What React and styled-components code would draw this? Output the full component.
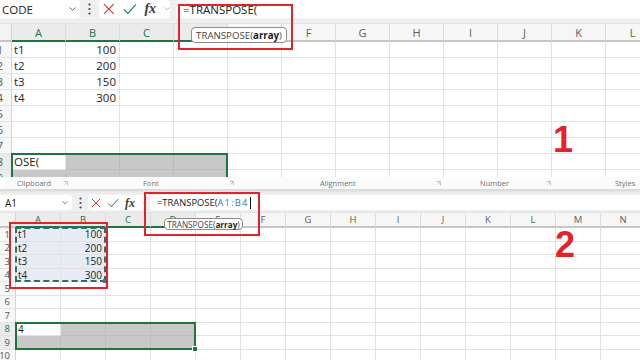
import React from 'react'
import styled, { createGlobalStyle } from 'styled-components'

const GlobalStyle = createGlobalStyle`
  html, body {
    margin: 0;
    padding: 0;
    background: #ffffff;
  }
  body {
    font-family: 'Open Sans', 'Liberation Sans', sans-serif;
  }
`

const RED = '#e3232a'
const GREEN = '#217346'

const Page = styled.div`
  position: relative;
  width: 640px;
  height: 360px;
  overflow: hidden;
  display: flex;
  flex-direction: column;
  background: #fff;
`

const Panel = styled.section`
  display: flex;
  flex-direction: column;
  overflow: hidden;
  flex: ${(p) => (p.$h ? `0 0 ${p.$h}px` : '1 1 auto')};
`

const FormulaBar = styled.div`
  display: flex;
  align-items: stretch;
  flex: 0 0 ${(p) => p.$h}px;
  box-sizing: border-box;
  padding: ${(p) => p.$padT}px 0 ${(p) => p.$padB}px;
  background: #efefef;
  border-bottom: 1px solid #e2e2e2;
`

const NameBox = styled.div`
  display: flex;
  align-items: center;
  justify-content: space-between;
  width: ${(p) => p.$w}px;
  box-sizing: border-box;
  padding: 0 4px 0 ${(p) => p.$pad}px;
  background: #fff;
  border-radius: 0 3px 3px 0;
  color: #222;
  font-size: ${(p) => p.$size}px;
`

const Dots = styled.div`
  display: flex;
  align-items: center;
  justify-content: center;
  width: ${(p) => p.$w}px;
`

const IconBox = styled.div`
  display: flex;
  align-items: center;
  gap: ${(p) => p.$gap}px;
  width: ${(p) => p.$w}px;
  box-sizing: border-box;
  padding-left: ${(p) => p.$pad}px;
  background: #fff;
  border-radius: 3px;
`

const Fx = styled.span`
  font-family: 'Liberation Serif', 'DejaVu Serif', serif;
  font-style: italic;
  font-weight: bold;
  font-size: ${(p) => p.$size}px;
  color: #3a3a3a;
  line-height: 1;
`

const FormulaInput = styled.div`
  flex: 1;
  display: flex;
  align-items: center;
  margin-left: ${(p) => p.$gap}px;
  padding-left: ${(p) => p.$pad}px;
  background: #fff;
  border-radius: 3px 0 0 3px;
  color: #1a1a1a;
  font-size: ${(p) => p.$size}px;
  white-space: pre;
`

const RefText = styled.span`
  color: #2f75b5;
  letter-spacing: 1.2px;
`

const Caret = styled.span`
  display: inline-block;
  width: 1px;
  height: 12px;
  margin-left: 1px;
  background: #111;
`

const Grid = styled.div`
  display: grid;
  grid-template-columns: ${(p) => p.$rowHdr}px repeat(${(p) => p.$cols}, ${(p) => p.$colW}px);
  grid-template-rows: ${(p) => p.$hdrH}px repeat(${(p) => p.$rows}, ${(p) => p.$rowH}px);
  flex: 1;
  overflow: hidden;
`

const Placed = styled.div`
  grid-row: ${(p) => p.$r};
  grid-column: ${(p) => p.$c};
  box-sizing: border-box;
`

const Corner = styled(Placed)`
  background: #f3f3f3;
  border-right: 1px solid #d4d4d4;
  border-bottom: 2px solid #c4c4c4;
`

const ColHeader = styled(Placed)`
  display: flex;
  align-items: center;
  justify-content: center;
  background: ${(p) => (p.$sel ? '#ebebeb' : '#f6f6f6')};
  color: ${(p) => (p.$sel ? GREEN : '#5e5e5e')};
  font-size: ${(p) => p.$size}px;
  border-right: 1px solid #dcdcdc;
  border-bottom: 2px solid ${(p) => (p.$sel ? GREEN : '#c6c6c6')};
`

const RowHeader = styled(Placed)`
  display: flex;
  align-items: center;
  justify-content: flex-end;
  padding-right: ${(p) => p.$pad}px;
  background: ${(p) => (p.$sel ? '#ebebeb' : '#f7f7f7')};
  color: ${(p) => (p.$sel ? GREEN : '#555')};
  font-size: ${(p) => p.$size}px;
  border-right: 1px solid #d4d4d4;
  border-bottom: 1px solid #e4e4e4;
`

const fills = {
  none: '#ffffff',
  gray: '#c8c8c8',
  ref: '#e7ebf4',
}

const Cell = styled(Placed)`
  display: flex;
  align-items: center;
  justify-content: ${(p) => (p.$right ? 'flex-end' : 'flex-start')};
  padding: 0 3px 0 2px;
  background: ${(p) => fills[p.$fill]};
  color: #1c1c1c;
  font-size: ${(p) => p.$size}px;
  white-space: nowrap;
  border-right: 1px solid ${(p) => (p.$fill === 'gray' ? '#bdbdbd' : '#e1e1e1')};
  border-bottom: 1px solid ${(p) => (p.$fill === 'gray' ? '#bdbdbd' : '#e1e1e1')};
`

const SelectionBox = styled(Placed)`
  position: relative;
  z-index: 2;
  margin: -1px 0 0 -1px;
  border: 2px solid ${GREEN};
  pointer-events: none;
  &::after {
    content: '';
    position: absolute;
    right: -4px;
    bottom: -4px;
    width: 4px;
    height: 4px;
    background: ${GREEN};
    border: 1px solid #fff;
  }
`

const RefBox = styled(Placed)`
  position: relative;
  z-index: 2;
  margin: -1px 0 0 -1px;
  border: 2px dashed #2b6f6a;
  pointer-events: none;
  &::after {
    content: '';
    position: absolute;
    right: -3px;
    bottom: -3px;
    width: 4px;
    height: 4px;
    background: #2f75b5;
  }
`

const RibbonStrip = styled.div`
  display: flex;
  flex: 0 0 12px;
  margin-left: 3px;
  background: #fbfbfb;
  border-top-left-radius: 4px;
  color: #707070;
  font-size: 7.5px;
`

const RibbonGroup = styled.div`
  display: flex;
  align-items: center;
  justify-content: space-between;
  width: ${(p) => p.$w}px;
  box-sizing: border-box;
  padding: 0 5px 0 ${(p) => p.$pad}px;
`

const Divider = styled.div`
  flex: 0 0 4px;
  background: linear-gradient(#d6d6d6, #ececec);
`

const Annotation = styled.div`
  position: absolute;
  left: ${(p) => p.$x}px;
  top: ${(p) => p.$y}px;
  width: ${(p) => p.$w}px;
  height: ${(p) => p.$h}px;
  box-sizing: border-box;
  border: 2px solid ${RED};
  z-index: 5;
`

const Tooltip = styled.div`
  position: absolute;
  left: ${(p) => p.$x}px;
  top: ${(p) => p.$y}px;
  width: ${(p) => p.$w}px;
  height: ${(p) => p.$h}px;
  box-sizing: border-box;
  display: flex;
  align-items: center;
  justify-content: center;
  background: #fff;
  border: 1px solid #8c8c8c;
  border-radius: 4px;
  color: #444;
  font-size: ${(p) => p.$size}px;
  white-space: nowrap;
  z-index: 4;
  b {
    color: #222;
  }
`

const StepNumber = styled.div`
  position: absolute;
  left: ${(p) => p.$x}px;
  top: ${(p) => p.$y}px;
  font-family: 'Liberation Sans', Arial, sans-serif;
  font-weight: bold;
  font-size: 36px;
  line-height: 1;
  color: ${RED};
  z-index: 5;
`

const CancelIcon = ({ size }) => (
  <svg width={size} height={size} viewBox='0 0 12 12'>
    <path d='M1 1L11 11M11 1L1 11' stroke='#d13438' strokeWidth='1.2' fill='none' />
  </svg>
)

const EnterIcon = ({ size }) => (
  <svg width={size + 2} height={size} viewBox='0 0 14 12'>
    <polyline points='1,6.5 5,10.5 13,1.5' stroke='#1e8a4c' strokeWidth='1.2' fill='none' />
  </svg>
)

const Chevron = ({ w = 7, color = '#444' }) => (
  <svg width={w} height={w * 0.6} viewBox='0 0 8 5'>
    <polyline points='0.5,0.5 4,4 7.5,0.5' stroke={color} strokeWidth='1' fill='none' />
  </svg>
)

const DotsIcon = () => (
  <svg width='3' height='12' viewBox='0 0 3 12'>
    <circle cx='1.5' cy='1.5' r='1.1' fill='#444' />
    <circle cx='1.5' cy='6' r='1.1' fill='#444' />
    <circle cx='1.5' cy='10.5' r='1.1' fill='#444' />
  </svg>
)

const Launcher = () => (
  <svg width='5' height='5' viewBox='0 0 5 5'>
    <path d='M0.5 0.5H4.5V4.5M1.5 3.5L4 1' stroke='#aaa' strokeWidth='0.7' fill='none' />
  </svg>
)

const data = [
  ['t1', 100],
  ['t2', 200],
  ['t3', 150],
  ['t4', 300],
]

const sheets = {
  first: {
    barH: 24, padT: 0, padB: 5,
    name: 'CODE', nameW: 80, namePad: 2, nameSize: 11.5,
    dotsW: 19, iconW: 71, iconPad: 4, iconGap: 8, iconSize: 12, fxSize: 14,
    formulaGap: 6, formulaPad: 7, formulaSize: 11.5,
    rowHdr: 12, rowHdrPad: 8, colW: 54, hdrH: 18, rowH: 16, rows: 9,
    cols: 'ABCDEFGHIJKL'.split(''), hdrSize: 11, cellSize: 11.5,
    active: 'OSE(', ref: false,
  },
  second: {
    barH: 20, padT: 2, padB: 2,
    name: 'A1', nameW: 72, namePad: 5, nameSize: 10,
    dotsW: 16, iconW: 58, iconPad: 3, iconGap: 6, iconSize: 10, fxSize: 12,
    formulaGap: 4, formulaPad: 7, formulaSize: 9.4,
    rowHdr: 16, rowHdrPad: 5, colW: 45, hdrH: 15, rowH: 13.5, rows: 10,
    cols: 'ABCDEFGHIJKLMN'.split(''), hdrSize: 9.5, cellSize: 10,
    active: '4', ref: true,
  },
}

const Sheet = ({ cfg, children }) => {
  const cells = [<Corner key='corner' $r={1} $c={1} />]
  cfg.cols.forEach((col, i) => {
    cells.push(
      <ColHeader key={'h' + col} $r={1} $c={i + 2} $sel={i < 4} $size={cfg.hdrSize}>
        {col}
      </ColHeader>
    )
  })
  for (let r = 1; r <= cfg.rows; r++) {
    const inSel = r === 8 || r === 9
    cells.push(
      <RowHeader key={'r' + r} $r={r + 1} $c={1} $sel={inSel} $pad={cfg.rowHdrPad} $size={cfg.hdrSize}>
        {r}
      </RowHeader>
    )
    cfg.cols.forEach((col, i) => {
      let text = ''
      if (r <= 4 && i < 2) text = data[r - 1][i]
      if (r === 8 && i === 0) text = cfg.active
      let fill = 'none'
      if (inSel && i < 4 && !(r === 8 && i === 0)) fill = 'gray'
      if (cfg.ref && r <= 4 && i < 2) fill = 'ref'
      cells.push(
        <Cell key={col + r} $r={r + 1} $c={i + 2} $fill={fill} $right={r <= 4 && i === 1} $size={cfg.cellSize}>
          {text}
        </Cell>
      )
    })
  }

  return (
    <>
      <FormulaBar $h={cfg.barH} $padT={cfg.padT} $padB={cfg.padB}>
        <NameBox $w={cfg.nameW} $pad={cfg.namePad} $size={cfg.nameSize}>
          <span>{cfg.name}</span>
          <Chevron w={cfg.iconSize * 0.6} />
        </NameBox>
        <Dots $w={cfg.dotsW}>
          <DotsIcon />
        </Dots>
        <IconBox $w={cfg.iconW} $pad={cfg.iconPad} $gap={cfg.iconGap}>
          <CancelIcon size={cfg.iconSize} />
          <EnterIcon size={cfg.iconSize} />
          <Fx $size={cfg.fxSize}>fx</Fx>
          <Chevron w={cfg.iconSize * 0.5} color='#9a9a9a' />
        </IconBox>
        <FormulaInput $gap={cfg.formulaGap} $pad={cfg.formulaPad} $size={cfg.formulaSize}>
          {children}
        </FormulaInput>
      </FormulaBar>
      <Grid
        $rowHdr={cfg.rowHdr}
        $cols={cfg.cols.length}
        $colW={cfg.colW}
        $hdrH={cfg.hdrH}
        $rows={cfg.rows}
        $rowH={cfg.rowH}
      >
        {cells}
        <SelectionBox $r='9 / 11' $c='2 / 6' />
        {cfg.ref && <RefBox $r='2 / 6' $c='2 / 4' />}
      </Grid>
    </>
  )
}

const ribbonGroups = [
  { label: 'Clipboard', w: 70, pad: 14, launcher: true },
  { label: 'Font', w: 166, pad: 70, launcher: true },
  { label: 'Alignment', w: 207, pad: 81, launcher: true },
  { label: 'Number', w: 110, pad: 34, launcher: true },
  { label: 'Styles', w: 84, pad: 59, launcher: false },
]

const App = () => {
  return (
    <Page>
      <GlobalStyle />
      <Panel $h={177}>
        <Sheet cfg={sheets.first}>=TRANSPOSE(</Sheet>
      </Panel>
      <RibbonStrip>
        {ribbonGroups.map((g) => (
          <RibbonGroup key={g.label} $w={g.w} $pad={g.pad}>
            <span>{g.label}</span>
            {g.launcher && <Launcher />}
          </RibbonGroup>
        ))}
      </RibbonStrip>
      <Divider />
      <Panel>
        <Sheet cfg={sheets.second}>
          =TRANSPOSE(<RefText>A1:B4</RefText>
          <Caret />
        </Sheet>
      </Panel>

      <Tooltip $x={191} $y={27} $w={96} $h={16} $size={9.7}>
        TRANSPOSE(<b>array</b>)
      </Tooltip>
      <Annotation $x={178} $y={4} $w={115} $h={46} />

      <Tooltip $x={164} $y={218} $w={79} $h={12} $size={8.2}>
        TRANSPOSE(<b>array</b>)
      </Tooltip>
      <Annotation $x={144} $y={192} $w={116} $h={44} />
      <Annotation $x={9} $y={222} $w={99} $h={67} />

      <StepNumber $x={553} $y={122}>1</StepNumber>
      <StepNumber $x={555} $y={227}>2</StepNumber>
    </Page>
  )
}

export default App
